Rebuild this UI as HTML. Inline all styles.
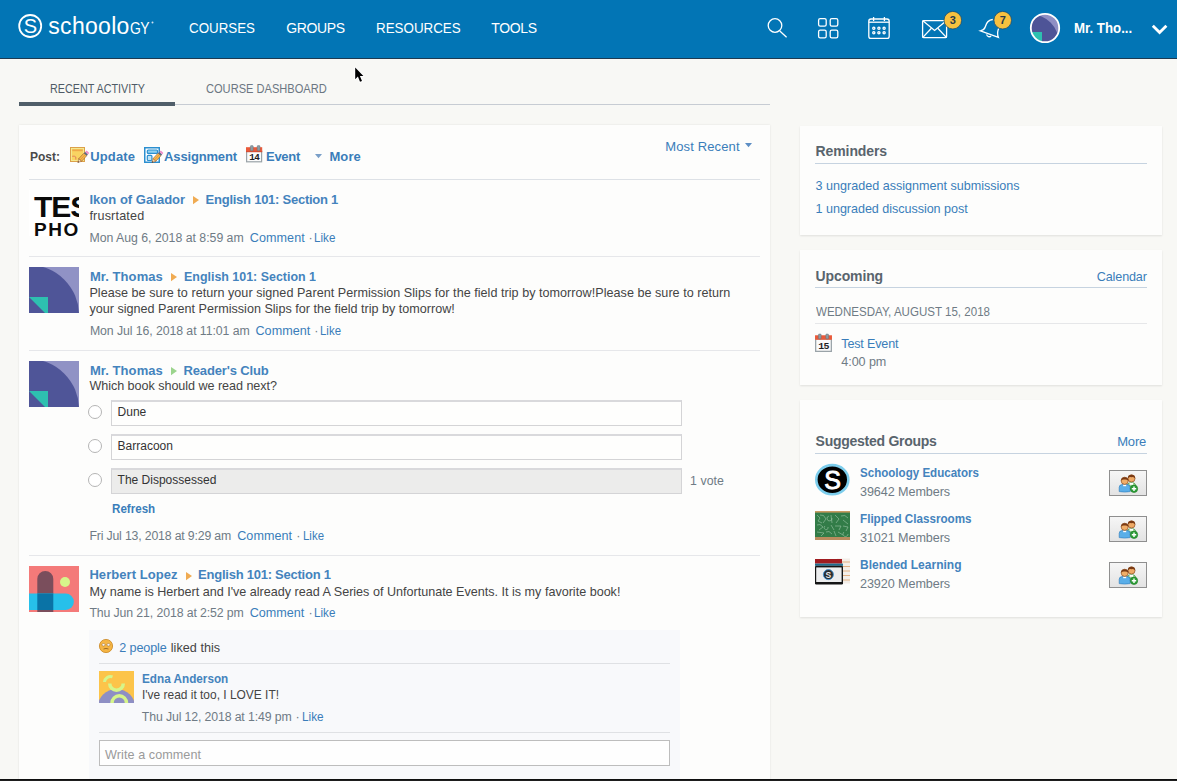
<!DOCTYPE html>
<html><head><meta charset="utf-8"><style>
html,body{margin:0;padding:0;}
body{width:1177px;height:781px;overflow:hidden;position:relative;background:#f8f8f5;font-family:"Liberation Sans",sans-serif;}
.t{position:absolute;white-space:pre;line-height:20px;}
.a{position:absolute;}
svg{position:absolute;overflow:visible;}
</style></head><body>
<!-- header -->
<div class="a" style="left:0;top:0;width:1177px;height:58px;background:#0275b5"></div>
<div class="a" style="left:0;top:58px;width:1177px;height:1px;background:#1d3a52"></div>
<svg style="left:0;top:0" width="200" height="58">
  <circle cx="30.2" cy="26" r="11" fill="none" stroke="#fff" stroke-width="1.8"/>
  <text x="30.4" y="33" font-family="Liberation Sans" font-size="20" fill="#fff" text-anchor="middle">S</text>
  <circle cx="152.5" cy="22.5" r="1" fill="#cfe0ee"/>
</svg>
<div class="t" style="left:48.3px;top:16.1px;font-size:23px;color:#fff;letter-spacing:0.3px">schoolo<span style="display:inline-block;margin-left:0.8px;font-size:16.6px;transform:scaleX(0.84);transform-origin:0 0;letter-spacing:-0.6px">GY</span></div>
<!-- header icons -->
<svg style="left:0;top:0" width="1177" height="58">
  <g fill="none" stroke="#fff" stroke-width="1.3">
    <circle cx="775" cy="25.5" r="6.8"/>
    <line x1="779.8" y1="31" x2="786.6" y2="37.2"/>
    <rect x="818.6" y="18.6" width="7.6" height="7.6" rx="1.6"/>
    <rect x="830.2" y="18.6" width="7.6" height="7.6" rx="1.6"/>
    <rect x="818.6" y="30.2" width="7.6" height="7.6" rx="1.6"/>
    <rect x="830.2" y="30.2" width="7.6" height="7.6" rx="1.6"/>
    <rect x="868.8" y="19" width="20.4" height="19.4" rx="2.2"/>
    <line x1="868.8" y1="22.2" x2="889.2" y2="22.2"/>
    <line x1="873.6" y1="17" x2="873.6" y2="21"/>
    <line x1="884.4" y1="17" x2="884.4" y2="21"/>
    <circle cx="873.8" cy="28.2" r="1.1"/><circle cx="878.9" cy="28.2" r="1.1"/><circle cx="884.1" cy="28.2" r="1.1"/>
    <circle cx="873.8" cy="32.8" r="1.1"/><circle cx="878.9" cy="32.8" r="1.1"/><circle cx="884.1" cy="32.8" r="1.1"/>
    <rect x="922.6" y="20.6" width="24" height="17" rx="1"/>
    <polyline points="922.6,20.6 934.6,30.4 946.6,20.6"/>
    <line x1="922.6" y1="37.6" x2="931.4" y2="28.2"/>
    <line x1="946.6" y1="37.6" x2="937.8" y2="28.2"/>
    <path d="M992.8,19.5 C988.2,19.8 986.2,23 985.2,27 C984.6,29.2 983.2,30.1 980.4,30.8 L998.4,37.4 C997.4,35 997.2,32 998.6,28.4"/>
    <path d="M986.8,34.4 C986.6,36.8 990,37.4 991,35.8"/>
  </g>
  <circle cx="952.8" cy="20.2" r="8.8" fill="#f8c13f" stroke="#1c4e70" stroke-width="0.8"/>
  <text x="952.8" y="24.3" font-family="Liberation Sans" font-weight="700" font-size="11" fill="#2a3a48" text-anchor="middle">3</text>
  <circle cx="1002.7" cy="20.2" r="8.8" fill="#f8c13f" stroke="#1c4e70" stroke-width="0.8"/>
  <text x="1002.7" y="24.3" font-family="Liberation Sans" font-weight="700" font-size="11" fill="#2a3a48" text-anchor="middle">7</text>
  <defs><clipPath id="hav"><circle cx="1045" cy="28" r="14"/></clipPath></defs>
  <g clip-path="url(#hav)">
    <rect x="1030" y="13" width="30" height="30" fill="#8f8fc4"/>
    <circle cx="1030" cy="43" r="29" fill="#4e5497"/>
    <rect x="1030" y="32" width="12" height="12" fill="#2ec0b0"/>
  </g>
  <circle cx="1045" cy="28" r="14.2" fill="none" stroke="#fff" stroke-width="1.8"/>
  <polyline points="1152.8,25.8 1159.6,32.6 1166.4,25.8" fill="none" stroke="#fff" stroke-width="2.8"/>
</svg>
<!-- tabs -->
<div class="a" style="left:19px;top:102px;width:156px;height:4px;background:#505e69"></div>
<div class="a" style="left:175px;top:104px;width:595px;height:1px;background:#c7ccd3"></div>
<!-- main card -->
<div class="a" style="left:19px;top:125px;width:751px;height:700px;background:#fdfdfc;box-shadow:0 0 2px rgba(0,0,0,0.10)"></div>
<div class="a" style="left:29px;top:179px;width:731px;height:1px;background:#dde1e6"></div>
<div class="a" style="left:29px;top:256px;width:731px;height:1px;background:#e6e7ea"></div>
<div class="a" style="left:29px;top:350px;width:731px;height:1px;background:#e6e7ea"></div>
<div class="a" style="left:29px;top:555px;width:731px;height:1px;background:#e6e7ea"></div>

<!-- avatars -->
<div class="a" style="left:29px;top:190px;width:50px;height:46px;background:#fff;overflow:hidden">
  <div style="position:absolute;left:5px;top:1.5px;font:700 30px/30px 'Liberation Sans';color:#0b0b0b;letter-spacing:-1px">TES</div>
  <div style="position:absolute;left:5px;top:29.5px;font:700 19px/19px 'Liberation Sans';color:#0b0b0b;letter-spacing:1.6px">PHO</div>
</div>
<svg style="left:29px;top:267px" width="50" height="46" viewBox="0 0 50 46"><defs><clipPath id="av1"><rect width="50" height="46"/></clipPath></defs><g clip-path="url(#av1)"><rect width="50" height="46" fill="#9092c5"/><circle cx="0" cy="48" r="50" fill="#4f5598"/><polygon points="0,30 19,30 19,46 16,46" fill="#2ec0b0"/></g></svg>
<svg style="left:29px;top:361px" width="50" height="46" viewBox="0 0 50 46"><defs><clipPath id="av2"><rect width="50" height="46"/></clipPath></defs><g clip-path="url(#av2)"><rect width="50" height="46" fill="#9092c5"/><circle cx="0" cy="48" r="50" fill="#4f5598"/><polygon points="0,30 19,30 19,46 16,46" fill="#2ec0b0"/></g></svg>
<svg style="left:29px;top:566px" width="50" height="46" viewBox="0 0 50 46"><rect width="50" height="46" fill="#f47a79"/><path d="M8.3,46 V13 A8,8 0 0 1 24.3,13 V46 Z" fill="#7a4e5c"/><path d="M0,27.5 H36.6 A8.25,8.25 0 0 1 36.6,44 H0 Z" fill="#27c0ea"/><rect x="8.3" y="27.5" width="16" height="16.5" fill="#0a73a6"/><circle cx="36" cy="16" r="5" fill="#d7f58a"/></svg>
<!-- poll -->
<div class="a" style="left:88px;top:405px;width:12px;height:12px;border:1px solid #b5b5b5;border-radius:50%;background:#fff"></div>
<div class="a" style="left:88px;top:439px;width:12px;height:12px;border:1px solid #b5b5b5;border-radius:50%;background:#fff"></div>
<div class="a" style="left:88px;top:473px;width:12px;height:12px;border:1px solid #b5b5b5;border-radius:50%;background:#fff"></div>
<div class="a" style="left:111px;top:400px;width:569px;height:23px;border:1px solid #d4d4d6;border-top:2px solid #d9d9dc;background:#fefefd"></div>
<div class="a" style="left:111px;top:434px;width:569px;height:23px;border:1px solid #d4d4d6;border-top:2px solid #d9d9dc;background:#fefefd"></div>
<div class="a" style="left:111px;top:468px;width:569px;height:23px;border:1px solid #d4d4d6;border-top:2px solid #d9d9dc;background:#ececeb"></div>
<!-- comments area -->
<div class="a" style="left:89px;top:630px;width:591px;height:160px;background:#f8f9fb"></div>
<div class="a" style="left:99px;top:663px;width:571px;height:1px;background:#dfe1e4"></div>
<div class="a" style="left:99px;top:732px;width:571px;height:1px;background:#dfe1e4"></div>
<div class="a" style="left:99px;top:740px;width:569px;height:24px;border:1px solid #bdbdbd;background:#fefefe"></div>
<svg style="left:99px;top:671px;overflow:hidden" width="35" height="32" viewBox="0 0 35 32"><rect width="35" height="32" fill="#fcc44a"/><circle cx="17.5" cy="37" r="19" fill="#8e8fc4"/><path d="M10.75,12.5 A6.75,6.75 0 0 0 24.25,12.5" fill="none" stroke="#d6f58a" stroke-width="3.5"/><path d="M5.5,11 A6,6 0 0 1 13.5,5.8" fill="none" stroke="#d6f58a" stroke-width="3"/><path d="M13,32 A7.25,7.25 0 0 1 27.5,32" fill="none" stroke="#d6f58a" stroke-width="3.5"/></svg>
<svg style="left:99px;top:639px" width="15" height="15" viewBox="0 0 15 15"><circle cx="7" cy="7" r="6.6" fill="#f5b544" stroke="#c98520" stroke-width="0.8"/><ellipse cx="4.5" cy="5.8" rx="1.6" ry="1.2" fill="#fff" stroke="#8a5a20" stroke-width="0.5"/><ellipse cx="9.5" cy="5.8" rx="1.6" ry="1.2" fill="#fff" stroke="#8a5a20" stroke-width="0.5"/><path d="M4.5,10 Q7,8.8 9.5,10" stroke="#8a5a20" stroke-width="0.8" fill="none"/></svg>
<!-- bottom dark line -->
<div class="a" style="left:0;top:779px;width:1177px;height:1px;background:#101010"></div><div class="a" style="left:0;top:780px;width:1177px;height:1px;background:#1e1e1e"></div>
<!-- sidebar cards -->
<div class="a" style="left:800px;top:126px;width:362px;height:109px;background:#fdfdfc;box-shadow:0 1px 2px rgba(0,0,0,0.10)"></div>
<div class="a" style="left:815px;top:163px;width:332px;height:1px;background:#c6d3e0"></div>
<div class="a" style="left:800px;top:250px;width:362px;height:135px;background:#fdfdfc;box-shadow:0 1px 2px rgba(0,0,0,0.10)"></div>
<div class="a" style="left:815px;top:287px;width:332px;height:1px;background:#c6d3e0"></div>
<div class="a" style="left:815px;top:323px;width:332px;height:1px;background:#e6e7e9"></div>
<div class="a" style="left:800px;top:400px;width:362px;height:217px;background:#fdfdfc;box-shadow:0 1px 2px rgba(0,0,0,0.10)"></div>
<div class="a" style="left:815px;top:453px;width:332px;height:1px;background:#c6d3e0"></div>

<!-- post icons -->
<svg style="left:70px;top:147px" width="18" height="16" viewBox="0 0 18 16">
  <rect x="0.5" y="0.5" width="14" height="14" fill="#f9d462" stroke="#dca04a"/>
  <rect x="1.5" y="1.5" width="12" height="12" fill="none" stroke="#f3ee9c" stroke-width="0.8"/>
  <rect x="2.3" y="2.4" width="10.4" height="1.8" fill="#efa94a"/>
  <path d="M2.2,9.3 Q4.5,8.6 5.8,10 L5.8,12.6" fill="none" stroke="#e07a5a" stroke-width="0.9"/>
  <g transform="translate(12.2,10.8) rotate(-47)">
    <rect x="-3" y="-1.9" width="7.6" height="3.8" fill="#f6b94c" stroke="#9a5a2a" stroke-width="0.6"/>
    <line x1="-3" y1="0" x2="4.6" y2="0" stroke="#e0903a" stroke-width="0.7"/>
    <rect x="4.6" y="-1.9" width="1.8" height="3.8" fill="#5a6a80"/>
    <rect x="6.4" y="-1.9" width="1.9" height="3.8" rx="0.6" fill="#f08cc8"/>
    <polygon points="-3,-1.9 -6.4,0 -3,1.9" fill="#f3d9b0" stroke="#9a5a2a" stroke-width="0.5"/>
    <polygon points="-5.2,-0.7 -6.6,0 -5.2,0.7" fill="#3a2a20"/>
  </g>
</svg>
<svg style="left:144px;top:147px" width="18" height="16" viewBox="0 0 18 16">
  <rect x="0.75" y="0.75" width="14.5" height="14.5" fill="#fff" stroke="#2b8fd0" stroke-width="1.5"/>
  <rect x="3.3" y="3" width="10.2" height="3.4" rx="0.9" fill="#8fd0f0" stroke="#2b8fd0" stroke-width="1.2"/>
  <rect x="3.3" y="8.3" width="4.6" height="5.2" rx="0.9" fill="#bfe3f5" stroke="#2b8fd0" stroke-width="1.2"/>
  <g transform="translate(12.4,10.8) rotate(-47)">
    <rect x="-3" y="-1.9" width="7.6" height="3.8" fill="#f6b94c" stroke="#9a5a2a" stroke-width="0.6"/>
    <line x1="-3" y1="0" x2="4.6" y2="0" stroke="#e0903a" stroke-width="0.7"/>
    <rect x="4.6" y="-1.9" width="1.8" height="3.8" fill="#5a6a80"/>
    <rect x="6.4" y="-1.9" width="1.9" height="3.8" rx="0.6" fill="#f08cc8"/>
    <polygon points="-3,-1.9 -6.4,0 -3,1.9" fill="#f3d9b0" stroke="#9a5a2a" stroke-width="0.5"/>
    <polygon points="-5.2,-0.7 -6.6,0 -5.2,0.7" fill="#3a2a20"/>
  </g>
</svg>
<svg style="left:246px;top:145px" width="17" height="18" viewBox="0 0 17 18">
  <rect x="0.6" y="6" width="15" height="10.8" fill="#fbfbfb" stroke="#9aa3a8" stroke-width="1.2"/>
  <rect x="0" y="2.2" width="16.2" height="4.8" fill="#ea5a3a"/>
  <rect x="0" y="6.4" width="16.2" height="0.8" fill="#c94a30"/>
  <rect x="4.4" y="0.6" width="2.8" height="5.2" rx="0.7" fill="#8c9ca4" stroke="#5e6e76" stroke-width="0.4"/>
  <rect x="11.2" y="0.6" width="2.8" height="5.2" rx="0.7" fill="#8c9ca4" stroke="#5e6e76" stroke-width="0.4"/>
  <text x="8.2" y="14.9" font-family="Liberation Mono" font-weight="700" font-size="9.4" fill="#1f1f1f" text-anchor="middle" letter-spacing="-0.8">14</text>
</svg>
<svg style="left:315px;top:154px" width="8" height="6"><polygon points="0,0 7,0 3.5,4.2" fill="#7a9fc8"/></svg>
<svg style="left:745px;top:143px" width="8" height="6"><polygon points="0,0 7,0 3.5,4.2" fill="#5d8ec4"/></svg>
<!-- breadcrumb arrows -->
<svg style="left:193px;top:195.6px" width="7" height="9"><polygon points="0,0 6,4.1 0,8.2" fill="#f0ab52"/></svg>
<svg style="left:170.7px;top:273.4px" width="7" height="9"><polygon points="0,0 6,4.1 0,8.2" fill="#f0ab52"/></svg>
<svg style="left:171px;top:366.8px" width="7" height="9"><polygon points="0,0 6,4.1 0,8.2" fill="#9bd48c"/></svg>
<svg style="left:186.2px;top:571.7px" width="7" height="9"><polygon points="0,0 6,4.1 0,8.2" fill="#f0ab52"/></svg>
<!-- upcoming cal -->
<svg style="left:815px;top:334px" width="17" height="18" viewBox="0 0 16 17">
  <rect x="0.6" y="4.8" width="14.8" height="11.6" fill="#fbfbfb" stroke="#9aa3a8" stroke-width="1.2"/>
  <rect x="0" y="1.2" width="16" height="4.2" fill="#ea5a3a"/>
  <rect x="3.2" y="0" width="2.6" height="4.6" rx="0.7" fill="#8c9ca4" stroke="#5e6e76" stroke-width="0.4"/>
  <rect x="10.2" y="0" width="2.6" height="4.6" rx="0.7" fill="#8c9ca4" stroke="#5e6e76" stroke-width="0.4"/>
  <text x="8" y="14.6" font-family="Liberation Mono" font-weight="700" font-size="9.4" fill="#1f1f1f" text-anchor="middle" letter-spacing="-0.8">15</text>
</svg>
<!-- group icons -->
<svg style="left:815px;top:464px" width="35" height="32" viewBox="0 0 35 32">
  <ellipse cx="17.3" cy="15.7" rx="16" ry="14.6" fill="#000" stroke="#7ccdec" stroke-width="2.6"/>
  <text x="17.5" y="24.6" font-family="Liberation Sans" font-weight="400" font-size="25" fill="#fff" text-anchor="middle" stroke="#fff" stroke-width="0.9">S</text>
</svg>
<svg style="left:815px;top:511px" width="35" height="29" viewBox="0 0 35 29">
  <rect width="35" height="29" fill="#327c48"/>
  <rect width="35" height="1.6" fill="#c99a62"/>
  <rect y="26" width="35" height="3" fill="#b98c5e"/>
  <g stroke="#a8ccb0" stroke-width="0.6" fill="none" opacity="0.9">
    <path d="M2,4 L5,7 L3,10 L7,12 M5,4 Q9,3 11,8 L8,12 M14,5 A2.5,2.5 0 1 0 17,7 M16,4 L17,12 M20,4 L24,8 L21,12 M26,5 Q30,3 33,7 M28,9 L33,13 M2,14 Q5,12 8,16 L4,19 M10,15 A2,2 0 1 0 13,16 M16,14 L19,19 M20,15 L26,15 L24,19 M28,15 L33,16 L31,20 M2,21 L9,22 L6,25 M11,21 Q14,19 17,23 M19,20 L21,25 M23,21 L28,24 M29,21 A2.5,2.5 0 1 0 33,23"/>
  </g>
</svg>
<svg style="left:815px;top:558px" width="35" height="27" viewBox="0 0 35 27">
  <rect x="22" y="0.5" width="13" height="25" fill="#f3eee8"/>
  <g stroke="#e0a878" stroke-width="0.9"><line x1="27" y1="4" x2="35" y2="4"/><line x1="28" y1="8.5" x2="35" y2="8.5"/><line x1="28" y1="13" x2="35" y2="13"/><line x1="28" y1="17.5" x2="35" y2="17.5"/><line x1="28" y1="22" x2="35" y2="22"/></g>
  <rect x="0" y="1" width="27" height="4.6" fill="#a01c20"/>
  <rect x="0" y="5.6" width="28" height="2.2" fill="#1f6d8e"/>
  <rect x="0" y="7.8" width="28" height="18.6" rx="1.2" fill="#151515"/>
  <rect x="1.2" y="9.4" width="25.4" height="14.6" fill="#ecedee"/>
  <circle cx="13.4" cy="16.6" r="5" fill="#2b2b2b" stroke="#3a92d8" stroke-width="0.9"/>
  <text x="13.4" y="19.6" font-family="Liberation Sans" font-weight="700" font-size="8.5" fill="#e8e8e8" text-anchor="middle">S</text>
</svg>
<div class="a" style="left:1109px;top:470px;width:36px;height:24px;border:1px solid #8f8f8f;background:linear-gradient(#f6f6f6,#e3e3e3)"></div>
<svg style="left:1118px;top:474px" width="21" height="19" viewBox="0 0 21 19">
  <path d="M8.8,12.8 Q9,8.6 13.5,8.6 Q18,8.6 18,12.8 Z" fill="#8fd08a" stroke="#3d8a3a" stroke-width="0.6"/>
  <rect x="11.6" y="8.8" width="3.6" height="2" fill="#fff"/>
  <circle cx="13.5" cy="4.4" r="3.6" fill="#eeaa66" stroke="#7a3e18" stroke-width="0.6"/>
  <path d="M9.9,4.4 A3.6,3.6 0 0 1 17.1,4.4 Q15,2.6 13.5,3.2 Q11.5,2.6 9.9,4.4 Z" fill="#7a3a14"/>
  <path d="M1.2,17.6 L1.2,13.4 Q1.2,10.8 4,10.6 L9.4,10.6 Q12.2,10.8 12.2,13.4 L12.2,17.6 Q6.7,18.6 1.2,17.6 Z" fill="#5aaee8" stroke="#2a78b8" stroke-width="0.6"/>
  <rect x="5.2" y="10.6" width="3" height="1.6" fill="#fff"/>
  <circle cx="6.7" cy="6.8" r="3.6" fill="#f0ae68" stroke="#7a3e18" stroke-width="0.6"/>
  <path d="M3.1,6.8 A3.6,3.6 0 0 1 10.3,6.8 Q8.2,5 6.7,5.6 Q4.7,5 3.1,6.8 Z" fill="#7a3a14"/>
  <circle cx="16" cy="14.8" r="3.7" fill="#2e9e38" stroke="#1b7a22" stroke-width="0.6"/>
  <path d="M16,12.6 V17 M13.8,14.8 H18.2" stroke="#fff" stroke-width="1.4"/>
</svg>
<div class="a" style="left:1109px;top:516px;width:36px;height:24px;border:1px solid #8f8f8f;background:linear-gradient(#f6f6f6,#e3e3e3)"></div>
<svg style="left:1118px;top:520px" width="21" height="19" viewBox="0 0 21 19">
  <path d="M8.8,12.8 Q9,8.6 13.5,8.6 Q18,8.6 18,12.8 Z" fill="#8fd08a" stroke="#3d8a3a" stroke-width="0.6"/>
  <rect x="11.6" y="8.8" width="3.6" height="2" fill="#fff"/>
  <circle cx="13.5" cy="4.4" r="3.6" fill="#eeaa66" stroke="#7a3e18" stroke-width="0.6"/>
  <path d="M9.9,4.4 A3.6,3.6 0 0 1 17.1,4.4 Q15,2.6 13.5,3.2 Q11.5,2.6 9.9,4.4 Z" fill="#7a3a14"/>
  <path d="M1.2,17.6 L1.2,13.4 Q1.2,10.8 4,10.6 L9.4,10.6 Q12.2,10.8 12.2,13.4 L12.2,17.6 Q6.7,18.6 1.2,17.6 Z" fill="#5aaee8" stroke="#2a78b8" stroke-width="0.6"/>
  <rect x="5.2" y="10.6" width="3" height="1.6" fill="#fff"/>
  <circle cx="6.7" cy="6.8" r="3.6" fill="#f0ae68" stroke="#7a3e18" stroke-width="0.6"/>
  <path d="M3.1,6.8 A3.6,3.6 0 0 1 10.3,6.8 Q8.2,5 6.7,5.6 Q4.7,5 3.1,6.8 Z" fill="#7a3a14"/>
  <circle cx="16" cy="14.8" r="3.7" fill="#2e9e38" stroke="#1b7a22" stroke-width="0.6"/>
  <path d="M16,12.6 V17 M13.8,14.8 H18.2" stroke="#fff" stroke-width="1.4"/>
</svg>
<div class="a" style="left:1109px;top:562px;width:36px;height:24px;border:1px solid #8f8f8f;background:linear-gradient(#f6f6f6,#e3e3e3)"></div>
<svg style="left:1118px;top:566px" width="21" height="19" viewBox="0 0 21 19">
  <path d="M8.8,12.8 Q9,8.6 13.5,8.6 Q18,8.6 18,12.8 Z" fill="#8fd08a" stroke="#3d8a3a" stroke-width="0.6"/>
  <rect x="11.6" y="8.8" width="3.6" height="2" fill="#fff"/>
  <circle cx="13.5" cy="4.4" r="3.6" fill="#eeaa66" stroke="#7a3e18" stroke-width="0.6"/>
  <path d="M9.9,4.4 A3.6,3.6 0 0 1 17.1,4.4 Q15,2.6 13.5,3.2 Q11.5,2.6 9.9,4.4 Z" fill="#7a3a14"/>
  <path d="M1.2,17.6 L1.2,13.4 Q1.2,10.8 4,10.6 L9.4,10.6 Q12.2,10.8 12.2,13.4 L12.2,17.6 Q6.7,18.6 1.2,17.6 Z" fill="#5aaee8" stroke="#2a78b8" stroke-width="0.6"/>
  <rect x="5.2" y="10.6" width="3" height="1.6" fill="#fff"/>
  <circle cx="6.7" cy="6.8" r="3.6" fill="#f0ae68" stroke="#7a3e18" stroke-width="0.6"/>
  <path d="M3.1,6.8 A3.6,3.6 0 0 1 10.3,6.8 Q8.2,5 6.7,5.6 Q4.7,5 3.1,6.8 Z" fill="#7a3a14"/>
  <circle cx="16" cy="14.8" r="3.7" fill="#2e9e38" stroke="#1b7a22" stroke-width="0.6"/>
  <path d="M16,12.6 V17 M13.8,14.8 H18.2" stroke="#fff" stroke-width="1.4"/>
</svg>
<!-- cursor -->
<svg style="left:0;top:0" width="400" height="100"><polygon points="355.2,67.6 355.2,79.2 357.9,76.5 360,81.8 362,81 359.9,75.9 363.4,75.9" fill="#000" stroke="#fff" stroke-width="2" stroke-linejoin="round" paint-order="stroke"/></svg>

<div class="t" style="left:189.3px;top:18.15px;font-size:14px;font-weight:400;color:#fff;transform:scaleX(0.9533);transform-origin:0 0;">COURSES</div>
<div class="t" style="left:286.2px;top:18.15px;font-size:14px;font-weight:400;color:#fff;letter-spacing:-0.348px;">GROUPS</div>
<div class="t" style="left:375.6px;top:18.15px;font-size:14px;font-weight:400;color:#fff;transform:scaleX(0.9550);transform-origin:0 0;">RESOURCES</div>
<div class="t" style="left:491.2px;top:18.15px;font-size:14px;font-weight:400;color:#fff;letter-spacing:-0.341px;">TOOLS</div>
<div class="t" style="left:1073.6px;top:18.15px;font-size:14px;font-weight:700;color:#fff;transform:scaleX(0.9471);transform-origin:0 0;">Mr. Tho...</div>
<div class="t" style="left:49.7px;top:78.84px;font-size:12px;font-weight:400;color:#4f5b66;transform:scaleX(0.8979);transform-origin:0 0;">RECENT ACTIVITY</div>
<div class="t" style="left:205.6px;top:78.84px;font-size:12px;font-weight:400;color:#6c7782;transform:scaleX(0.9236);transform-origin:0 0;">COURSE DASHBOARD</div>
<div class="t" style="left:29.5px;top:146.80px;font-size:13px;font-weight:700;color:#4a4a4a;transform:scaleX(0.9231);transform-origin:0 0;">Post:</div>
<div class="t" style="left:90.3px;top:146.80px;font-size:13px;font-weight:700;color:#3a7dba;letter-spacing:0.106px;">Update</div>
<div class="t" style="left:164.1px;top:146.80px;font-size:13px;font-weight:700;color:#3a7dba;letter-spacing:-0.161px;">Assignment</div>
<div class="t" style="left:266.0px;top:146.80px;font-size:13px;font-weight:700;color:#3a7dba;letter-spacing:-0.281px;">Event</div>
<div class="t" style="left:329.4px;top:146.80px;font-size:13px;font-weight:700;color:#3a7dba;letter-spacing:0.134px;">More</div>
<div class="t" style="left:665.2px;top:136.50px;font-size:13px;font-weight:400;color:#3a7dba;letter-spacing:0.138px;">Most Recent</div>
<div class="t" style="left:89.4px;top:189.50px;font-size:13px;font-weight:700;color:#4483bd;letter-spacing:0.030px;">Ikon of Galador</div>
<div class="t" style="left:205.6px;top:189.50px;font-size:13px;font-weight:700;color:#4483bd;letter-spacing:-0.250px;">English 101: Section 1</div>
<div class="t" style="left:89.4px;top:205.63px;font-size:12.6px;font-weight:400;color:#444444;letter-spacing:0.180px;">frusrtated</div>
<div class="t" style="left:89.4px;top:227.74px;font-size:12.3px;font-weight:400;color:#6f7b85;letter-spacing:-0.008px;">Mon Aug 6, 2018 at 8:59 am</div>
<div class="t" style="left:249.8px;top:227.63px;font-size:12.6px;font-weight:400;color:#3a7dba;letter-spacing:0.058px;">Comment</div>
<div class="t" style="left:308.5px;top:227.63px;font-size:12.6px;font-weight:400;color:#6f7b85;">·</div>
<div class="t" style="left:314.4px;top:227.63px;font-size:12.6px;font-weight:400;color:#3a7dba;transform:scaleX(0.9260);transform-origin:0 0;">Like</div>
<div class="t" style="left:89.9px;top:267.10px;font-size:13px;font-weight:700;color:#4483bd;letter-spacing:0.075px;">Mr. Thomas</div>
<div class="t" style="left:183.7px;top:267.10px;font-size:13px;font-weight:700;color:#4483bd;transform:scaleX(0.9565);transform-origin:0 0;">English 101: Section 1</div>
<div class="t" style="left:89.4px;top:282.63px;font-size:12.6px;font-weight:400;color:#444444;letter-spacing:0.028px;">Please be sure to return your signed Parent Permission Slips for the field trip by tomorrow!Please be sure to return</div>
<div class="t" style="left:89.4px;top:298.83px;font-size:12.6px;font-weight:400;color:#444444;">your signed Parent Permission Slips for the field trip by tomorrow!</div>
<div class="t" style="left:89.9px;top:320.94px;font-size:12.3px;font-weight:400;color:#6f7b85;letter-spacing:-0.075px;">Mon Jul 16, 2018 at 11:01 am</div>
<div class="t" style="left:255.5px;top:320.83px;font-size:12.6px;font-weight:400;color:#3a7dba;letter-spacing:0.029px;">Comment</div>
<div class="t" style="left:314.2px;top:320.83px;font-size:12.6px;font-weight:400;color:#6f7b85;">·</div>
<div class="t" style="left:320.3px;top:320.83px;font-size:12.6px;font-weight:400;color:#3a7dba;transform:scaleX(0.9087);transform-origin:0 0;">Like</div>
<div class="t" style="left:89.9px;top:360.50px;font-size:13px;font-weight:700;color:#4483bd;letter-spacing:0.075px;">Mr. Thomas</div>
<div class="t" style="left:183.5px;top:360.50px;font-size:13px;font-weight:700;color:#4483bd;letter-spacing:-0.147px;">Reader&#x27;s Club</div>
<div class="t" style="left:89.4px;top:375.63px;font-size:12.6px;font-weight:400;color:#444444;letter-spacing:-0.046px;">Which book should we read next?</div>
<div class="t" style="left:117.6px;top:401.64px;font-size:12px;font-weight:400;color:#333;">Dune</div>
<div class="t" style="left:117.6px;top:435.64px;font-size:12px;font-weight:400;color:#333;">Barracoon</div>
<div class="t" style="left:117.6px;top:469.64px;font-size:12px;font-weight:400;color:#333;">The Dispossessed</div>
<div class="t" style="left:690.0px;top:470.74px;font-size:12.3px;font-weight:400;color:#6f7b85;letter-spacing:0.083px;">1 vote</div>
<div class="t" style="left:111.7px;top:499.03px;font-size:12.6px;font-weight:700;color:#3a7dba;transform:scaleX(0.9210);transform-origin:0 0;">Refresh</div>
<div class="t" style="left:89.4px;top:525.94px;font-size:12.3px;font-weight:400;color:#6f7b85;letter-spacing:-0.170px;">Fri Jul 13, 2018 at 9:29 am</div>
<div class="t" style="left:237.2px;top:525.83px;font-size:12.6px;font-weight:400;color:#3a7dba;letter-spacing:0.058px;">Comment</div>
<div class="t" style="left:296.3px;top:525.83px;font-size:12.6px;font-weight:400;color:#6f7b85;">·</div>
<div class="t" style="left:302.5px;top:525.83px;font-size:12.6px;font-weight:400;color:#3a7dba;transform:scaleX(0.9087);transform-origin:0 0;">Like</div>
<div class="t" style="left:89.4px;top:565.40px;font-size:13px;font-weight:700;color:#4483bd;letter-spacing:0.069px;">Herbert Lopez</div>
<div class="t" style="left:198.1px;top:565.40px;font-size:13px;font-weight:700;color:#4483bd;letter-spacing:-0.245px;">English 101: Section 1</div>
<div class="t" style="left:89.4px;top:581.53px;font-size:12.6px;font-weight:400;color:#444444;letter-spacing:-0.006px;">My name is Herbert and I&#x27;ve already read A Series of Unfortunate Events. It is my favorite book!</div>
<div class="t" style="left:89.4px;top:603.04px;font-size:12.3px;font-weight:400;color:#6f7b85;letter-spacing:-0.109px;">Thu Jun 21, 2018 at 2:52 pm</div>
<div class="t" style="left:249.8px;top:602.93px;font-size:12.6px;font-weight:400;color:#3a7dba;letter-spacing:-0.028px;">Comment</div>
<div class="t" style="left:308.5px;top:602.93px;font-size:12.6px;font-weight:400;color:#6f7b85;">·</div>
<div class="t" style="left:314.4px;top:602.93px;font-size:12.6px;font-weight:400;color:#3a7dba;transform:scaleX(0.9260);transform-origin:0 0;">Like</div>
<div class="t" style="left:119.2px;top:637.63px;font-size:12.6px;font-weight:400;color:#3a7dba;letter-spacing:-0.104px;">2 people</div>
<div class="t" style="left:170.7px;top:637.63px;font-size:12.6px;font-weight:400;color:#444444;letter-spacing:0.050px;">liked this</div>
<div class="t" style="left:141.8px;top:668.63px;font-size:12.6px;font-weight:700;color:#4483bd;transform:scaleX(0.9319);transform-origin:0 0;">Edna Anderson</div>
<div class="t" style="left:141.8px;top:684.63px;font-size:12.6px;font-weight:400;color:#444444;transform:scaleX(0.9481);transform-origin:0 0;">I&#x27;ve read it too, I LOVE IT!</div>
<div class="t" style="left:141.8px;top:706.74px;font-size:12.3px;font-weight:400;color:#6f7b85;letter-spacing:-0.127px;">Thu Jul 12, 2018 at 1:49 pm</div>
<div class="t" style="left:295.5px;top:706.63px;font-size:12.6px;font-weight:400;color:#6f7b85;">·</div>
<div class="t" style="left:301.5px;top:706.63px;font-size:12.6px;font-weight:400;color:#3a7dba;transform:scaleX(0.9347);transform-origin:0 0;">Like</div>
<div class="t" style="left:105.1px;top:744.83px;font-size:12.6px;font-weight:400;color:#9a9a9a;letter-spacing:0.070px;">Write a comment</div>
<div class="t" style="left:815.6px;top:141.25px;font-size:14px;font-weight:700;color:#59646d;letter-spacing:-0.107px;">Reminders</div>
<div class="t" style="left:815.6px;top:175.63px;font-size:12.6px;font-weight:400;color:#3a7dba;letter-spacing:-0.013px;">3 ungraded assignment submissions</div>
<div class="t" style="left:815.6px;top:198.63px;font-size:12.6px;font-weight:400;color:#3a7dba;letter-spacing:-0.051px;">1 ungraded discussion post</div>
<div class="t" style="left:815.6px;top:266.25px;font-size:14px;font-weight:700;color:#59646d;letter-spacing:-0.132px;">Upcoming</div>
<div class="t" style="left:1096.8px;top:266.73px;font-size:12.6px;font-weight:400;color:#3a7dba;letter-spacing:-0.139px;">Calendar</div>
<div class="t" style="left:815.6px;top:302.16px;font-size:12.8px;font-weight:400;color:#6f7b85;transform:scaleX(0.9027);transform-origin:0 0;">WEDNESDAY, AUGUST 15, 2018</div>
<div class="t" style="left:841.3px;top:334.13px;font-size:12.6px;font-weight:400;color:#3a7dba;letter-spacing:-0.181px;">Test Event</div>
<div class="t" style="left:841.3px;top:352.23px;font-size:12.6px;font-weight:400;color:#6f7b85;letter-spacing:-0.074px;">4:00 pm</div>
<div class="t" style="left:815.6px;top:431.15px;font-size:14px;font-weight:700;color:#59646d;letter-spacing:-0.265px;">Suggested Groups</div>
<div class="t" style="left:1117.2px;top:431.50px;font-size:13px;font-weight:400;color:#3a7dba;letter-spacing:-0.156px;">More</div>
<div class="t" style="left:860.0px;top:462.83px;font-size:12.6px;font-weight:700;color:#4483bd;transform:scaleX(0.9191);transform-origin:0 0;">Schoology Educators</div>
<div class="t" style="left:860.0px;top:481.63px;font-size:12.6px;font-weight:400;color:#6f7b85;letter-spacing:-0.078px;">39642 Members</div>
<div class="t" style="left:860.0px;top:508.83px;font-size:12.6px;font-weight:700;color:#4483bd;transform:scaleX(0.9271);transform-origin:0 0;">Flipped Classrooms</div>
<div class="t" style="left:860.0px;top:527.93px;font-size:12.6px;font-weight:400;color:#6f7b85;letter-spacing:-0.078px;">31021 Members</div>
<div class="t" style="left:860.0px;top:554.93px;font-size:12.6px;font-weight:700;color:#4483bd;transform:scaleX(0.9543);transform-origin:0 0;">Blended Learning</div>
<div class="t" style="left:860.0px;top:574.03px;font-size:12.6px;font-weight:400;color:#6f7b85;letter-spacing:-0.078px;">23920 Members</div>
</body></html>
